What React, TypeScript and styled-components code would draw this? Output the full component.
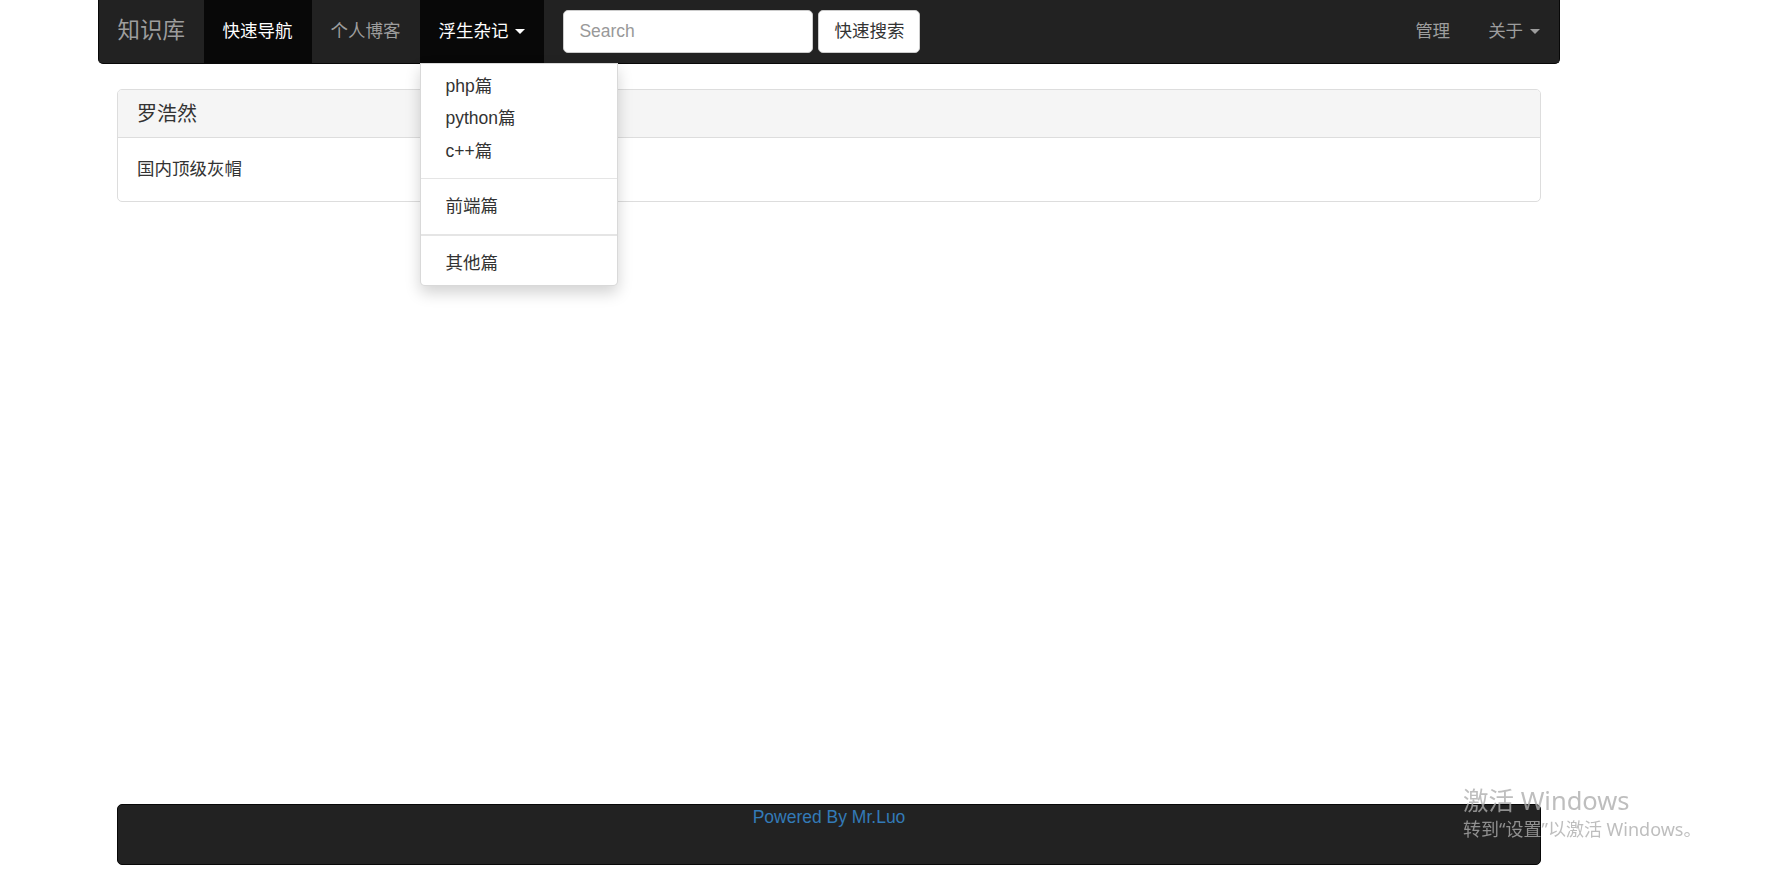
import { createGlobalStyle, styled } from "styled-components";

const GlobalStyle = createGlobalStyle`
  html, body {
    margin: 0;
    padding: 0;
    background: #fff;
  }
  body {
    font-family: "Liberation Sans", Arial, "Noto Sans CJK SC", sans-serif;
    font-size: 17.5px;
    line-height: 1.42857;
    color: #333;
  }
  * { box-sizing: border-box; }
  ul { margin: 0; padding: 0; list-style: none; }
`;

const Page = styled.div`
  min-height: 100vh;
  display: flex;
  flex-direction: column;
  padding: 0 0 25px 98px;
`;

const Container = styled.div`
  width: 1462px;
  display: flex;
  flex-direction: column;
  flex: 1;
`;

const Navbar = styled.nav`
  height: 63.5px;
  background: #222;
  border: 1px solid #080808;
  border-top: none;
  border-radius: 0 0 5px 5px;
  display: flex;
  align-items: stretch;
`;

const Brand = styled.a`
  padding: 0 18.5px;
  font-size: 22.5px;
  line-height: 62px;
  color: #9d9d9d;
  text-decoration: none;
`;

const Nav = styled.ul`
  display: flex;
  align-items: stretch;
`;

const NavItem = styled.li`
  position: relative;
  display: flex;
`;

const NavLink = styled.a<{ $active?: boolean }>`
  display: flex;
  align-items: center;
  padding: 0 19px;
  background: ${(p) => (p.$active ? "#080808" : "transparent")};
  color: ${(p) => (p.$active ? "#fff" : "#9d9d9d")};
  text-decoration: none;
  white-space: pre;
`;

const Caret = styled.span`
  display: inline-block;
  width: 0;
  height: 0;
  margin-left: 2px;
  border-top: 5px solid currentColor;
  border-left: 5px solid transparent;
  border-right: 5px solid transparent;
`;

const SearchForm = styled.form`
  display: flex;
  align-items: flex-start;
  gap: 5px;
  padding: 10px 19px 0;
`;

const SearchInput = styled.input`
  width: 250px;
  height: 42.5px;
  padding: 7.5px 15px;
  border: 1px solid #ccc;
  border-radius: 5px;
  font: inherit;
  color: #555;
  background: #fff;
  &::placeholder { color: #999; }
`;

const Button = styled.button`
  height: 42.5px;
  padding: 7.5px 15px;
  border: 1px solid #ccc;
  border-radius: 5px;
  background: #fff;
  color: #333;
  font: inherit;
  line-height: 25px;
`;

const NavRight = styled(Nav)`
  margin-left: auto;
`;

const Dropdown = styled.ul`
  position: absolute;
  top: 100%;
  left: 0;
  width: 198px;
  padding: 6px 0;
  background: #fff;
  border: 1px solid rgba(0, 0, 0, 0.15);
  border-radius: 0 0 5px 5px;
  box-shadow: 0 7px 15px rgba(0, 0, 0, 0.175);
  z-index: 10;
`;

const DropItem = styled.li`
  height: 32.5px;
  line-height: 32.5px;
  padding: 0 25px;
  color: #333;
  white-space: nowrap;
`;

const Divider = styled.li<{ $thick?: boolean }>`
  height: ${(p) => (p.$thick ? "2px" : "1px")};
  margin: 11px 0;
  background: #e5e5e5;
`;

const Panel = styled.section`
  margin: 25.5px 19px 0;
  border: 1px solid #ddd;
  border-radius: 5px;
  background: #fff;
  overflow: hidden;
`;

const PanelHeading = styled.div`
  padding: 13px 19px 12px;
  background: #f5f5f5;
  border-bottom: 1px solid #ddd;
  font-size: 20px;
  line-height: 22px;
  color: #333;
`;

const PanelBody = styled.div`
  padding: 18.5px 19px 19px;
  line-height: 25px;
`;

const Footer = styled.footer`
  margin: auto 19px 0;
  height: 61px;
  background: #222;
  border: 1px solid #080808;
  border-radius: 5px;
  text-align: center;
  color: #337ab7;
  line-height: 25px;
`;

const Watermark = styled.div`
  position: fixed;
  left: 1463px;
  top: 784px;
  font-family: "Noto Sans", "Noto Sans CJK SC", sans-serif;
  color: rgba(173, 173, 173, 0.79);
  pointer-events: none;
`;

const WatermarkTitle = styled.div`
  font-size: 25.5px;
  line-height: 33px;
`;

const WatermarkSub = styled.div`
  font-size: 18px;
  line-height: 25px;
`;

export default function App() {
  return (
    <>
      <GlobalStyle />
      <Page>
        <Container>
          <Navbar>
            <Brand href="#">知识库</Brand>
            <Nav>
              <NavItem>
                <NavLink $active href="#">快速导航</NavLink>
              </NavItem>
              <NavItem>
                <NavLink href="#">个人博客</NavLink>
              </NavItem>
              <NavItem>
                <NavLink $active href="#">
                  浮生杂记 <Caret />
                </NavLink>
                <Dropdown>
                  <DropItem>php篇</DropItem>
                  <DropItem>python篇</DropItem>
                  <DropItem>c++篇</DropItem>
                  <Divider />
                  <DropItem>前端篇</DropItem>
                  <Divider $thick />
                  <DropItem>其他篇</DropItem>
                </Dropdown>
              </NavItem>
            </Nav>
            <SearchForm onSubmit={(e) => e.preventDefault()}>
              <SearchInput type="text" placeholder="Search" />
              <Button type="submit">快速搜索</Button>
            </SearchForm>
            <NavRight>
              <NavItem>
                <NavLink href="#">管理</NavLink>
              </NavItem>
              <NavItem>
                <NavLink href="#">
                  关于 <Caret />
                </NavLink>
              </NavItem>
            </NavRight>
          </Navbar>

          <Panel>
            <PanelHeading>罗浩然</PanelHeading>
            <PanelBody>国内顶级灰帽</PanelBody>
          </Panel>

          <Footer>Powered By Mr.Luo</Footer>
        </Container>
      </Page>
      <Watermark>
        <WatermarkTitle>激活 Windows</WatermarkTitle>
        <WatermarkSub>转到“设置”以激活 Windows。</WatermarkSub>
      </Watermark>
    </>
  );
}
